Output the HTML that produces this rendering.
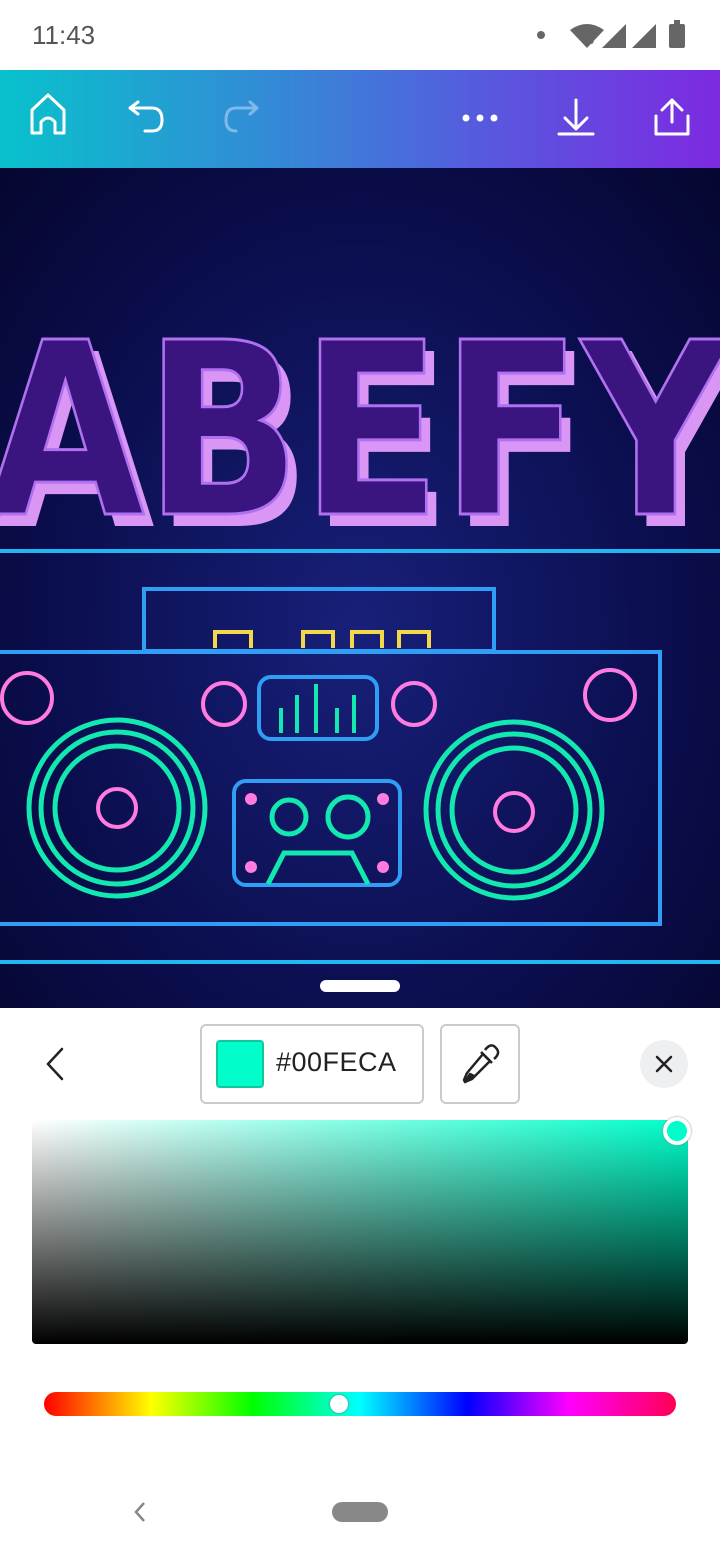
<!DOCTYPE html>
<html><head><meta charset="utf-8"><style>
*{margin:0;padding:0;box-sizing:border-box}
body{width:720px;height:1560px;position:relative;overflow:hidden;background:#fff;font-family:"Liberation Sans",sans-serif}
.abs{position:absolute}
</style></head><body>
<div class="abs" style="left:32px;top:20px;font-size:26px;color:#555">11:43</div>
<svg class="abs" style="left:530px;top:18px" width="170" height="34" viewBox="0 0 170 34">
<circle cx="11" cy="17" r="4" fill="#666"/>
<path d="M40 12 Q57 0 74 12 L57 30 Z" fill="#666"/><text x="58" y="26" font-size="11" fill="#666" font-family="Liberation Sans">5</text>
<path d="M72 30 L96 6 L96 30 Z" fill="#666"/><path d="M102 30 L126 6 L126 30 Z" fill="#666"/>
<rect x="139" y="6" width="16" height="24" rx="2" fill="#666"/><rect x="144" y="2" width="6" height="5" fill="#666"/>
</svg>
<div class="abs" style="left:0;top:70px;width:720px;height:98px;background:linear-gradient(90deg,#08c2cc,#3c7fd8 45%,#5a55df 70%,#7d2ae0)"></div>
<svg class="abs" style="left:0;top:70px" width="720" height="98" viewBox="0 0 720 98" fill="none" stroke="#fff" stroke-width="3" stroke-linecap="round" stroke-linejoin="round">
<path d="M32 63 V40 L48 25 L64 40 V63 H55 V52 Q48 44 41 52 V63 Z"/>
<path d="M133 38 H152 Q162 38 162 50 Q162 61 152 61 H145 M138 32 L130 38 L138 44"/>
<path d="M255 38 H236 Q226 38 226 50 Q226 61 236 61 M250 32 L257 38 L250 44" stroke="#7fb8ea"/>
<circle cx="466" cy="48" r="3.5" fill="#fff" stroke="none"/><circle cx="480" cy="48" r="3.5" fill="#fff" stroke="none"/><circle cx="494" cy="48" r="3.5" fill="#fff" stroke="none"/>
<path d="M576 30 V58 M565 48 L576 59 L587 48 M559 64 H593"/>
<path d="M672 30 V52 M662 40 L672 30 L682 40 M656 46 V64 H688 V46"/>
</svg>
<div class="abs" style="left:0;top:168px;width:720px;height:840px;background:radial-gradient(ellipse at 50% 55%,#18207a,#0b0e4e 60%,#05062f)"></div>
<svg class="abs" style="left:0;top:168px" width="720" height="840" viewBox="0 168 720 840" fill="none">
<g font-family="DejaVu Sans" font-weight="bold" font-size="240">
<text x="-4" y="526" textLength="744" lengthAdjust="spacingAndGlyphs" fill="#d996f5">ABEFY</text>
<text x="-14" y="514" textLength="744" lengthAdjust="spacingAndGlyphs" fill="#3a1580" stroke="#b070f0" stroke-width="3">ABEFY</text></g>
<line x1="0" y1="551" x2="720" y2="551" stroke="#23b6f0" stroke-width="4"/>
<line x1="0" y1="962" x2="720" y2="962" stroke="#23b6f0" stroke-width="4"/>
<g stroke="#2f9ef5" stroke-width="4">
<rect x="144" y="589" width="350" height="62"/>
<path d="M0 652 H660 V924 H0"/>
<rect x="259" y="677" width="118" height="62" rx="12"/>
<rect x="234" y="781" width="166" height="104" rx="12"/>
</g>
<g stroke="#f2d84a" stroke-width="4"><path d="M215 648 V632 H251 V648 M303 648 V632 H333 V648 M352 648 V632 H382 V648 M399 648 V632 H429 V648"/></g>
<g stroke="#ff7be0" stroke-width="4">
<circle cx="27" cy="698" r="25"/><circle cx="224" cy="704" r="21"/><circle cx="414" cy="704" r="21"/><circle cx="610" cy="695" r="25"/>
<circle cx="117" cy="808" r="19"/><circle cx="514" cy="812" r="19"/>
</g>
<g fill="#ff7be0"><circle cx="251" cy="799" r="6"/><circle cx="383" cy="799" r="6"/><circle cx="251" cy="867" r="6"/><circle cx="383" cy="867" r="6"/></g>
<g stroke="#12e8b0" stroke-width="5">
<circle cx="117" cy="808" r="88"/><circle cx="117" cy="808" r="76"/><circle cx="117" cy="808" r="62"/>
<circle cx="514" cy="810" r="88"/><circle cx="514" cy="810" r="76"/><circle cx="514" cy="810" r="62"/>
<circle cx="289" cy="817" r="17"/><circle cx="348" cy="817" r="20"/>
<path d="M268 884 L284 853 H352 L368 884"/>
<path d="M281 733 V708 M297 733 V695 M316 733 V684 M337 733 V708 M354 733 V695" stroke-width="4"/>
</g>
</svg>
<div class="abs" style="left:320px;top:980px;width:80px;height:12px;border-radius:6px;background:#fff"></div>
<div class="abs" style="left:0;top:1008px;width:720px;height:552px;background:#fff;border-radius:44px 44px 0 0"></div>
<svg class="abs" style="left:40px;top:1044px" width="30" height="40"><path d="M22 5 L8 20 L22 35" fill="none" stroke="#222" stroke-width="2.5" stroke-linecap="round"/></svg>
<div class="abs" style="left:200px;top:1024px;width:224px;height:80px;border:2px solid #c8ccd0;border-radius:6px"></div>
<div class="abs" style="left:216px;top:1040px;width:48px;height:48px;background:#00feca;border:2px solid #10c8a0;border-radius:4px"></div>
<div class="abs" style="left:276px;top:1047px;font-size:27px;color:#222;letter-spacing:0.5px">#00FECA</div>
<div class="abs" style="left:440px;top:1024px;width:80px;height:80px;border:2px solid #c8ccd0;border-radius:6px"></div>
<svg class="abs" style="left:456px;top:1040px" width="48" height="48" viewBox="0 0 48 48" fill="none" stroke="#222" stroke-width="2.5" stroke-linejoin="round"><path d="M27 14 L34 21 L16 39 L9 42 L8 40 L11 33 Z"/><path d="M29 10 Q35 2 40 8 Q45 13 38 19 M25 12 L36 23"/><path d="M9 42 L14 34 L18 36 Z" fill="#222"/></svg>
<div class="abs" style="left:640px;top:1040px;width:48px;height:48px;border-radius:24px;background:#eeeff1"></div>
<svg class="abs" style="left:640px;top:1040px" width="48" height="48"><path d="M17 17 L31 31 M31 17 L17 31" stroke="#222" stroke-width="2.5" stroke-linecap="round"/></svg>
<div class="abs" style="left:32px;top:1120px;width:656px;height:224px;border-radius:4px;background:linear-gradient(to bottom,rgba(0,0,0,0),#000),linear-gradient(to right,#fff,#00feca)"></div>
<div class="abs" style="left:663px;top:1117px;width:28px;height:28px;border-radius:14px;border:4px solid #fff;background:#00feca;box-shadow:0 0 2px #888"></div>
<div class="abs" style="left:44px;top:1392px;width:632px;height:24px;border-radius:12px;background:linear-gradient(90deg,#f00,#ff0 17%,#0f0 33%,#0ff 50%,#00f 67%,#f0f 83%,#f05)"></div>
<div class="abs" style="left:330px;top:1395px;width:18px;height:18px;border-radius:9px;background:#fff;box-shadow:0 0 2px #666"></div>
<svg class="abs" style="left:128px;top:1498px" width="24" height="28"><path d="M16 5 L8 14 L16 23" fill="none" stroke="#888" stroke-width="2.5"/></svg>
<div class="abs" style="left:332px;top:1502px;width:56px;height:20px;border-radius:10px;background:#888"></div>
</body></html>
